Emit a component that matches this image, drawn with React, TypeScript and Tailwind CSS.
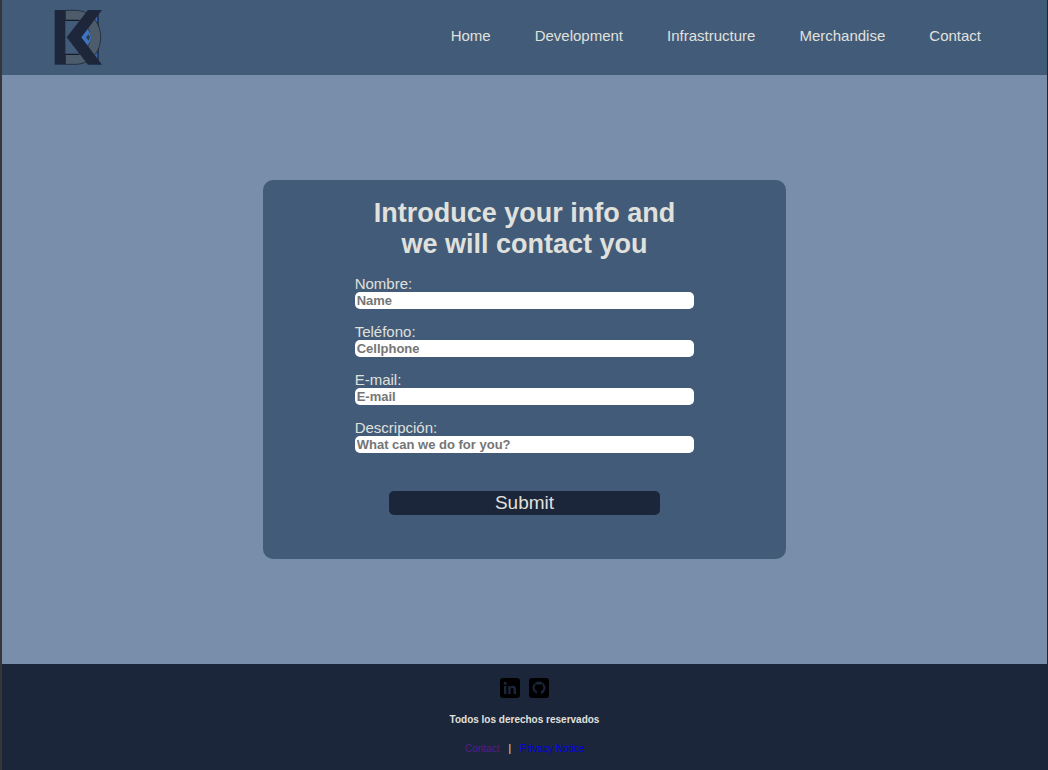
import React from "react";

const navItems = ["Home", "Development", "Infrastructure", "Merchandise", "Contact"];

const fields = [
  { id: "name", label: "Nombre:", placeholder: "Name", type: "text" },
  { id: "phone", label: "Teléfono:", placeholder: "Cellphone", type: "tel" },
  { id: "email", label: "E-mail:", placeholder: "E-mail", type: "email" },
  { id: "description", label: "Descripción:", placeholder: "What can we do for you?", type: "text" },
];

function Logo() {
  return (
    <svg viewBox="42 27 147 171" className="h-[57px] w-[49px]" aria-hidden="true">
      <path d="M150 31H173V192H150Z" fill="#3569b0" />
      <path d="M174 31V192" stroke="#10151f" strokeWidth="3" />
      <path
        d="M76 31H105C152 31 182 68 182 112C182 156 152 193 105 193H76V163H105C132 163 150 140 150 112C150 84 132 61 105 61H76Z"
        fill="#4d5c6b"
        stroke="#151d2a"
        strokeWidth="2"
      />
      <path d="M76 62H110C136 66 150 88 150 112C150 136 136 159 110 162H76Z" fill="#425b78" />
      <path d="M76 61H118M76 163H118" stroke="#10151f" strokeWidth="3" />
      <path d="M122 112L142 88Q153 100 153 112Q153 124 142 136Z" fill="#3d74c4" />
      <path d="M138 112L146 103L150 112L146 122Z" fill="#303b4b" />
      <path d="M44 30H76V194H44Z" fill="#1d263a" />
      <path d="M144 30H186L124 112L186 194H144L80 112Z" fill="#1d263a" />
    </svg>
  );
}

function LinkedInIcon() {
  return (
    <svg viewBox="0 0 20 20" className="size-5" aria-hidden="true">
      <rect width="20" height="20" rx="3" fill="#000" />
      <circle cx="5.2" cy="5.2" r="1.5" fill="#1c263a" />
      <path
        d="M4 8H6.4V16H4ZM8.2 8H10.5V9.2C11.1 8.2 12 7.8 13 7.8C15.3 7.8 16 9.3 16 11.6V16H13.6V12.1C13.6 10.8 13.4 9.9 12.2 9.9C11 9.9 10.6 10.8 10.6 12.1V16H8.2Z"
        fill="#1c263a"
      />
    </svg>
  );
}

function GitHubIcon() {
  return (
    <svg viewBox="0 0 20 20" className="size-5" aria-hidden="true">
      <rect width="20" height="20" rx="3" fill="#000" />
      <circle cx="10" cy="10" r="6.4" fill="#1c263a" />
      <path
        d="M8 17V14.4C8 13.9 8.2 13.5 8.5 13.2C6.6 12.9 5.6 11.8 5.6 9.8C5.6 9 5.9 8.3 6.4 7.8C6.2 7.2 6.2 6.5 6.5 5.9C7.1 5.9 7.7 6.2 8.3 6.6Q10 6.2 11.7 6.6C12.3 6.2 12.9 5.9 13.5 5.9C13.8 6.5 13.8 7.2 13.6 7.8C14.1 8.3 14.4 9 14.4 9.8C14.4 11.8 13.4 12.9 11.5 13.2C11.8 13.5 12 13.9 12 14.4V17Z"
        fill="#000"
      />
      <path d="M8 14.8C6.6 15.1 6.3 14 5.4 13.3" fill="none" stroke="#000" strokeWidth="0.8" />
    </svg>
  );
}

export default function App() {
  return (
    <div className="flex min-h-screen flex-col border-r border-l-2 border-r-[#1c263a] border-l-[#35363c] bg-[#788eab] font-['Liberation_Sans',Arial,sans-serif] text-[#e0e1dd]">
      <header className="flex h-[75px] items-center justify-between bg-[#425b78] pr-[66px] pl-[52px]">
        <a href="#" aria-label="Home">
          <Logo />
        </a>
        <nav className="flex gap-11 pb-1 text-[15px] leading-[17px]">
          {navItems.map((item) => (
            <a key={item} href={`#${item.toLowerCase()}`}>
              {item}
            </a>
          ))}
        </nav>
      </header>

      <main className="flex grow items-center justify-center">
        <form
          className="flex w-1/2 flex-col items-center rounded-[10px] bg-[#425b78] pt-[18px] pb-11"
          onSubmit={(event) => event.preventDefault()}
        >
          <h1 className="w-[65%] text-center text-[27px] leading-[31px] font-bold">
            Introduce your info and we will contact you
          </h1>
          <div className="mt-4 flex w-[65%] flex-col gap-[15px]">
            {fields.map((field) => (
              <div key={field.id} className="flex flex-col">
                <label htmlFor={field.id} className="text-[15px] leading-4">
                  {field.label}
                </label>
                <input
                  id={field.id}
                  type={field.type}
                  placeholder={field.placeholder}
                  className="h-[17px] w-full rounded-[5px] bg-white px-0.5 text-[13px] leading-[15px] font-bold text-black placeholder:text-[#757575]"
                />
              </div>
            ))}
          </div>
          <button
            type="submit"
            className="mt-[38px] h-6 w-[52%] rounded-[5px] bg-[#1c263a] text-[19px] leading-6"
          >
            Submit
          </button>
        </form>
      </main>

      <footer className="flex h-[106px] flex-col items-center bg-[#1c263a] pt-3.5">
        <div className="flex gap-[9px]">
          <a href="#linkedin" aria-label="LinkedIn">
            <LinkedInIcon />
          </a>
          <a href="#github" aria-label="GitHub">
            <GitHubIcon />
          </a>
        </div>
        <p className="mt-4 text-[10px] leading-3 font-bold">Todos los derechos reservados</p>
        <div className="mt-[17px] flex items-center gap-[9px] text-[10px] leading-3">
          <a href="#contact" className="text-[#551a8b]">
            Contact
          </a>
          <span>|</span>
          <a href="#privacy" className="text-[#0000ee]">
            Privacy Notice
          </a>
        </div>
      </footer>
    </div>
  );
}
